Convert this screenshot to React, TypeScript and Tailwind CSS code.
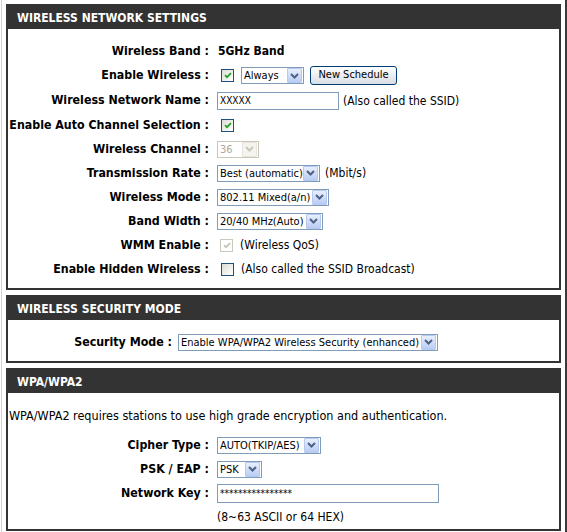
import type { ReactNode } from "react";

const font = "font-['DejaVu_Sans_Condensed','DejaVu_Sans',sans-serif]";

function Arrow({ disabled }: { disabled?: boolean }) {
  return (
    <span
      className={
        disabled
          ? "flex h-[15px] w-[15px] shrink-0 items-center justify-center rounded-[1px] border border-[#e6e4dc] bg-[#f5f4ef]"
          : "flex h-[15px] w-[15px] shrink-0 items-center justify-center rounded-[1px] border border-[#b7c9f0] bg-linear-to-b from-[#e8effd] to-[#b9ccf3]"
      }
    >
      <svg width="9" height="6" viewBox="0 0 9 6">
        <path
          d="M1 1l3.5 3.5L8 1"
          stroke={disabled ? "#c9c7ba" : "#4d6185"}
          strokeWidth="2"
          fill="none"
        />
      </svg>
    </span>
  );
}

function Select({
  value,
  className,
  disabled,
}: {
  value: string;
  className: string;
  disabled?: boolean;
}) {
  return (
    <div
      className={`flex h-[17px] items-center justify-between border bg-white pl-[2px] pr-px text-[11px] ${
        disabled ? "border-[#c9c7ba] text-[#aca899]" : "border-[#7f9db9] text-black"
      } ${className}`}
    >
      <span className="overflow-hidden whitespace-nowrap leading-none">{value}</span>
      <Arrow disabled={disabled} />
    </div>
  );
}

function Check({ checked, disabled }: { checked?: boolean; disabled?: boolean }) {
  return (
    <span
      className={
        disabled
          ? "ml-[3px] flex h-[13px] w-[13px] shrink-0 items-center justify-center border border-[#cac8bb] bg-white"
          : "ml-[4px] flex h-[13px] w-[13px] shrink-0 items-center justify-center border border-[#1c5180] bg-linear-to-br from-[#dcdcd7] to-white"
      }
    >
      {checked && (
        <svg width="8" height="7" viewBox="0 0 8 7">
          <path
            d="M1 3.2l2 2L7 1.2"
            stroke={disabled ? "#c4c2b6" : "#21a121"}
            strokeWidth="1.7"
            fill="none"
          />
        </svg>
      )}
    </span>
  );
}

function TextBox({ value, className }: { value: string; className: string }) {
  return (
    <div
      className={`flex items-center border border-[#7f9db9] bg-white pl-[2px] text-[10px] text-black ${className}`}
    >
      {value}
    </div>
  );
}

function Row({
  label,
  children,
  narrow,
  tall,
}: {
  label?: string;
  children: ReactNode;
  narrow?: boolean;
  tall?: boolean;
}) {
  return (
    <div className={`flex items-center ${tall ? "h-[25px]" : "h-[24px]"}`}>
      <div
        className={`${narrow ? "w-[164px]" : "w-[201px]"} shrink-0 text-right text-[12.3px] font-bold text-black`}
      >
        {label ? `${label} :` : ""}
      </div>
      <div className={`${narrow ? "pl-[6px]" : "pl-[8px]"} flex items-center text-[12px] text-black`}>
        {children}
      </div>
    </div>
  );
}

function Panel({ title, children }: { title: string; children: ReactNode }) {
  return (
    <div className="mb-[5px] border-2 border-[#333]">
      <div className="h-[23px] bg-[#333] pl-[9px] text-[12px] font-bold leading-[24px] text-white">
        {title}
      </div>
      {children}
    </div>
  );
}

export default function App() {
  return (
    <div className={`h-[532px] w-[567px] overflow-hidden bg-white ${font}`}>
      <div className="ml-px h-full border-l border-r-2 border-l-[#d4d4d4] border-r-[#3a3a3a] pl-[4px] pr-[4px] pt-[4px]">
        <Panel title="WIRELESS NETWORK SETTINGS">
          <div className="pb-[7px] pt-[10px]">
            <Row label="Wireless Band">
              <span className="pl-px font-bold">5GHz Band</span>
            </Row>
            <Row label="Enable Wireless" tall>
              <Check checked />
              <Select value="Always" className="ml-[7px] w-[63px]" />
              <span className="ml-[6px] flex h-[19px] w-[87px] items-center justify-center rounded-[3px] border border-[#003c74] bg-linear-to-b from-white to-[#d9dde4] text-[11px]">
                New Schedule
              </span>
            </Row>
            <Row label="Wireless Network Name" tall>
              <TextBox value="XXXXX" className="h-[18px] w-[122px]" />
              <span className="ml-[4px]">(Also called the SSID)</span>
            </Row>
            <Row label="Enable Auto Channel Selection">
              <Check checked />
            </Row>
            <Row label="Wireless Channel">
              <Select value="36" disabled className="w-[42px]" />
            </Row>
            <Row label="Transmission Rate">
              <Select value="Best (automatic)" className="w-[103px]" />
              <span className="ml-[5px]">(Mbit/s)</span>
            </Row>
            <Row label="Wireless Mode">
              <Select value="802.11 Mixed(a/n)" className="w-[112px]" />
            </Row>
            <Row label="Band Width">
              <Select value="20/40 MHz(Auto)" className="w-[106px]" />
            </Row>
            <Row label="WMM Enable">
              <Check checked disabled />
              <span className="ml-[7px]">(Wireless QoS)</span>
            </Row>
            <Row label="Enable Hidden Wireless">
              <Check />
              <span className="ml-[7px]">(Also called the SSID Broadcast)</span>
            </Row>
          </div>
        </Panel>

        <Panel title="WIRELESS SECURITY MODE">
          <div className="pb-[7px] pt-[10px]">
            <Row label="Security Mode" narrow>
              <Select value="Enable WPA/WPA2 Wireless Security (enhanced)" className="w-[260px]" />
            </Row>
          </div>
        </Panel>

        <Panel title="WPA/WPA2">
          <div className="pt-[11px]">
            <div className="flex h-[24px] items-center pl-px text-[12.5px] text-black">
              WPA/WPA2 requires stations to use high grade encryption and authentication.
            </div>
            <div className="pt-[5px]">
              <Row label="Cipher Type">
                <Select value="AUTO(TKIP/AES)" className="w-[104px]" />
              </Row>
              <Row label="PSK / EAP">
                <Select value="PSK" className="w-[45px]" />
              </Row>
              <Row label="Network Key">
                <TextBox value="****************" className="h-[19px] w-[222px]" />
              </Row>
              <Row>
                <span>(8~63 ASCII or 64 HEX)</span>
              </Row>
            </div>
          </div>
        </Panel>
      </div>
    </div>
  );
}
